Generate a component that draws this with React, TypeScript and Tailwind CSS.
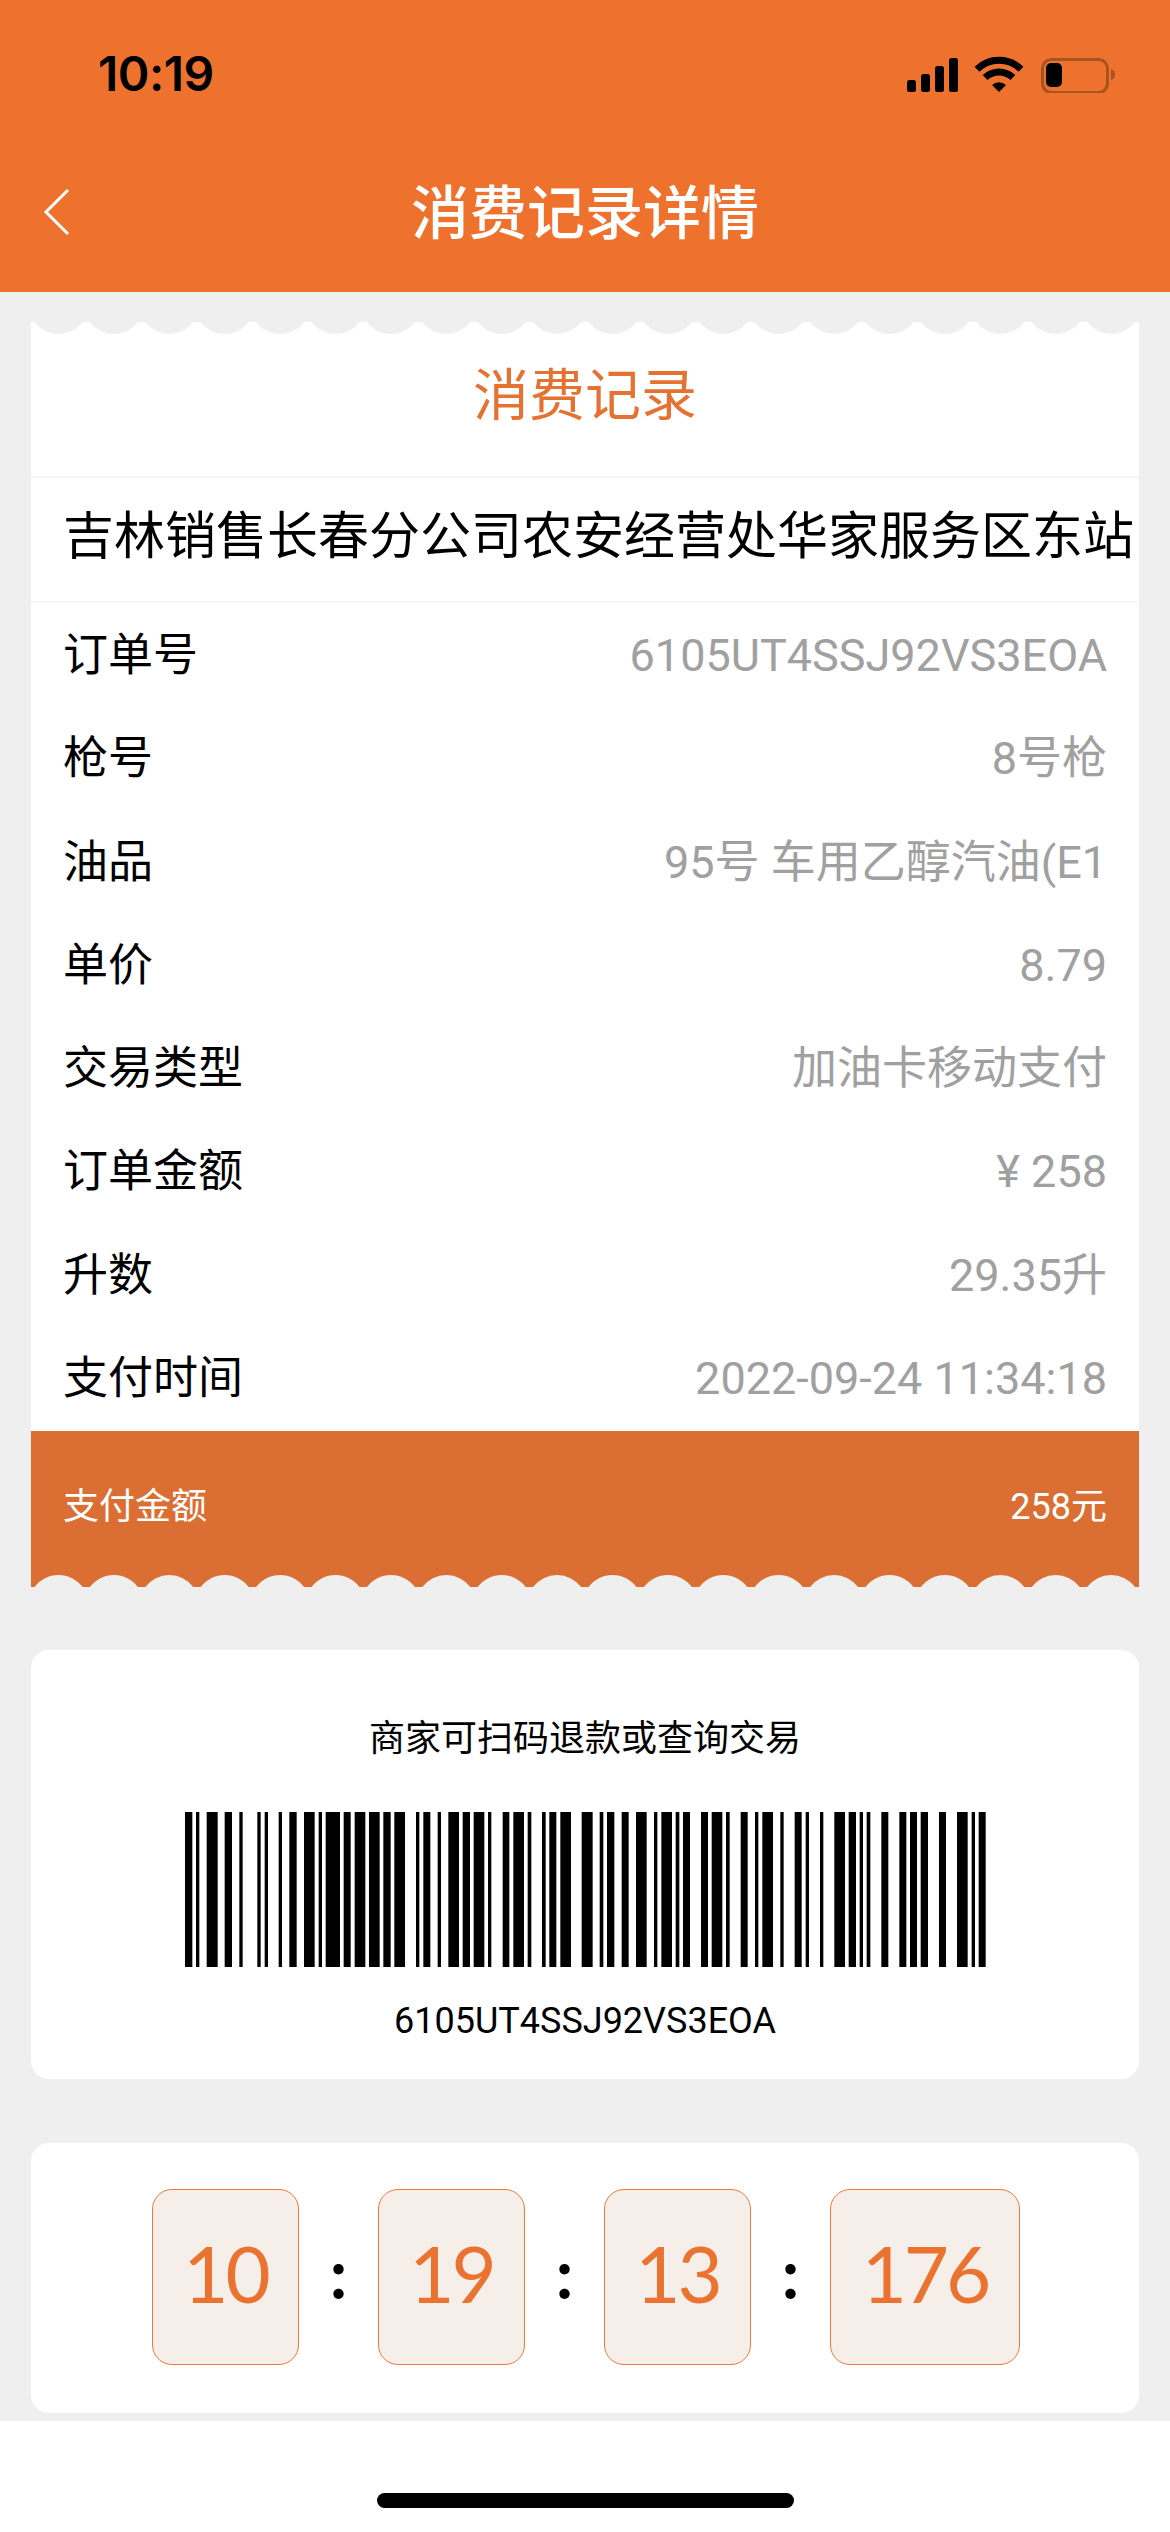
const rows: [string, string][] = [
  ["订单号", "6105UT4SSJ92VS3EOA"],
  ["枪号", "8号枪"],
  ["油品", "95号 车用乙醇汽油(E1"],
  ["单价", "8.79"],
  ["交易类型", "加油卡移动支付"],
  ["订单金额", "¥ 258"],
  ["升数", "29.35升"],
  ["支付时间", "2022-09-24 11:34:18"],
];

const left: [number, number][] = [
  [42, 64], [75, 85], [107, 140], [161, 183], [205, 215], [259, 269], [281, 291], [323, 333], [355, 377], [399, 431],
  [443, 453], [464, 507], [518, 539], [551, 583], [594, 626], [637, 659], [670, 702], [735, 745], [757, 778], [800, 810],
  [832, 864], [875, 897], [908, 940], [951, 961], [995, 1015], [1027, 1059], [1070, 1081], [1113, 1124], [1135, 1156], [1168, 1200],
];
const right: [number, number][] = [
  [2, 35], [56, 67], [78, 100], [122, 143], [165, 197], [219, 229], [241, 273], [284, 295], [306, 327], [360, 381],
  [392, 424], [435, 446], [479, 500], [522, 532], [544, 576], [598, 608], [641, 662], [674, 684], [717, 727], [760, 792],
  [803, 825], [836, 846], [857, 868], [901, 922], [955, 976], [987, 1008], [1019, 1041], [1074, 1095], [1128, 1160], [1172, 1182], [1193, 1214],
];

function Scallops({ down }: { down: boolean }) {
  const items = Array.from({ length: 20 }, (_, i) => i);
  return (
    <svg width="1108" height="12" viewBox="0 0 1108 12" className="block">
      {items.map((i) => {
        const x = 3.5 + i * 55.4;
        return (
          <path
            key={i}
            fill="#efefef"
            d={
              down
                ? `M${x} 0 A30 30 0 0 0 ${x + 48} 0 Z`
                : `M${x} 12 A30 30 0 0 1 ${x + 48} 12 Z`
            }
          />
        );
      })}
    </svg>
  );
}

function StatusIcons() {
  return (
    <svg width="208" height="37" viewBox="907 55 208 37" className="block">
      <rect x="907" y="79" width="9" height="12" rx="2.5" fill="#000" />
      <rect x="921" y="73" width="9" height="18" rx="2.5" fill="#000" />
      <rect x="935" y="65" width="9" height="26" rx="2.5" fill="#000" />
      <rect x="949" y="57" width="9" height="34" rx="2.5" fill="#000" />
      <path d="M977 68.3 A31.5 31.5 0 0 1 1021 68.3" fill="none" stroke="#000" strokeWidth="7" />
      <path d="M985.1 76.6 A20 20 0 0 1 1012.9 76.6" fill="none" stroke="#000" strokeWidth="7" />
      <path d="M999 91 L992 84 A10 10 0 0 1 1006 84 Z" fill="#000" />
      <rect x="1042.5" y="58.5" width="65" height="33" rx="9" fill="none" stroke="#a85420" strokeWidth="3" />
      <rect x="1046" y="62" width="16" height="24" rx="5" fill="#000" />
      <path d="M1111 68 C1114 69 1115 71 1115 73.5 C1115 76 1114 78 1111 79 Z" fill="#a85420" />
    </svg>
  );
}

function TimeBox({ value, wide }: { value: string; wide?: boolean }) {
  return (
    <div
      className={`flex h-[176px] items-center justify-center rounded-[20px] border border-[#ee7a3a] bg-[#f6eee8] pb-[9px] font-['Lato',sans-serif] text-[78px] font-normal leading-none tracking-[-3px] text-[#ea7331] ${
        wide ? "w-[190px]" : "w-[147px]"
      }`}
    >
      {value}
    </div>
  );
}

function Colon() {
  return (
    <div className="flex h-[176px] w-[79px] items-center justify-center pb-[6px] font-['Inter',sans-serif] text-[66px] font-semibold leading-none text-black">
      :
    </div>
  );
}

export default function App() {
  return (
    <div className="flex h-[2532px] w-[1170px] flex-col overflow-hidden bg-white font-['Roboto','Noto_Sans_CJK_SC',sans-serif]">
      <header className="h-[292px] shrink-0 bg-[#ee722e]">
        <div className="flex h-[148px] items-center justify-between pl-[98px] pr-[55px]">
          <span className="font-['Inter',sans-serif] text-[48px] font-semibold leading-none tracking-[-0.5px] text-black">10:19</span>
          <StatusIcons />
        </div>
        <div className="grid h-[128px] grid-cols-[1fr_auto_1fr] items-center">
          <svg width="28" height="48" viewBox="0 0 28 48" className="ml-[43px] block">
            <path d="M25 2 L3 24 L25 46" fill="none" stroke="#fff" strokeWidth="3" />
          </svg>
          <h1 className="pb-[6px] font-['Noto_Sans_CJK_SC',sans-serif] text-[58px] font-medium leading-none text-white">消费记录详情</h1>
          <div />
        </div>
      </header>

      <main className="h-[2129px] shrink-0 bg-[#efefef] px-[31px] pt-[30px]">
        <section className="flex h-[1265px] flex-col bg-white">
          <Scallops down />
          <div className="flex h-[144px] items-center justify-center border-b-2 border-[#f6f6f6] pb-[28px] font-['Noto_Sans_CJK_SC',sans-serif] text-[56px] leading-none text-[#e57231]">
            消费记录
          </div>
          <div className="flex h-[125px] items-center border-b-2 border-[#f6f6f6] pb-[14px] pl-[32px] whitespace-nowrap font-['Noto_Sans_CJK_SC',sans-serif] text-[51px] leading-none text-black">
            吉林销售长春分公司农安经营处华家服务区东站
          </div>
          <div className="flex h-[828px] flex-col px-[32px] pt-[1px]">
            {rows.map(([k, v]) => (
              <div key={k} className="flex h-[103.25px] items-center justify-between text-[45px] leading-none">
                <span className="text-black">{k}</span>
                <span className="whitespace-nowrap text-[#a0a0a0]">{v}</span>
              </div>
            ))}
          </div>
          <div className="flex h-[144px] items-center justify-between bg-[#db6f33] px-[32px] pt-[8px] text-[36px] leading-none text-white">
            <span>支付金额</span>
            <span>258元</span>
          </div>
          <div className="bg-[#db6f33]">
            <Scallops down={false} />
          </div>
        </section>

        <section className="mt-[63px] flex h-[429px] flex-col items-center rounded-[18px] bg-white pt-[64px]">
          <div className="h-[50px] text-[36px] leading-[50px] text-black">商家可扫码退款或查询交易</div>
          <svg width="802" height="155" viewBox="183 0 802 155" className="mt-[48px] block">
            {left.map(([a, b]) => (
              <rect key={`l${a}`} x={170 + a / 3} y="0" width={(b - a) / 3} height="155" fill="#000" />
            ))}
            {right.map(([a, b]) => (
              <rect key={`r${a}`} x={580 + a / 3} y="0" width={(b - a) / 3} height="155" fill="#000" />
            ))}
          </svg>
          <div className="mt-[29px] h-[50px] text-[36px] leading-[50px] text-black">6105UT4SSJ92VS3EOA</div>
        </section>

        <section className="mt-[64px] flex h-[270px] items-start rounded-[18px] bg-white pl-[121px] pt-[46px]">
          <TimeBox value="10" />
          <Colon />
          <TimeBox value="19" />
          <Colon />
          <TimeBox value="13" />
          <Colon />
          <TimeBox value="176" wide />
        </section>
      </main>

      <div className="flex flex-1 justify-center bg-white pt-[72px]">
        <div className="h-[15px] w-[417px] rounded-full bg-black" />
      </div>
    </div>
  );
}
